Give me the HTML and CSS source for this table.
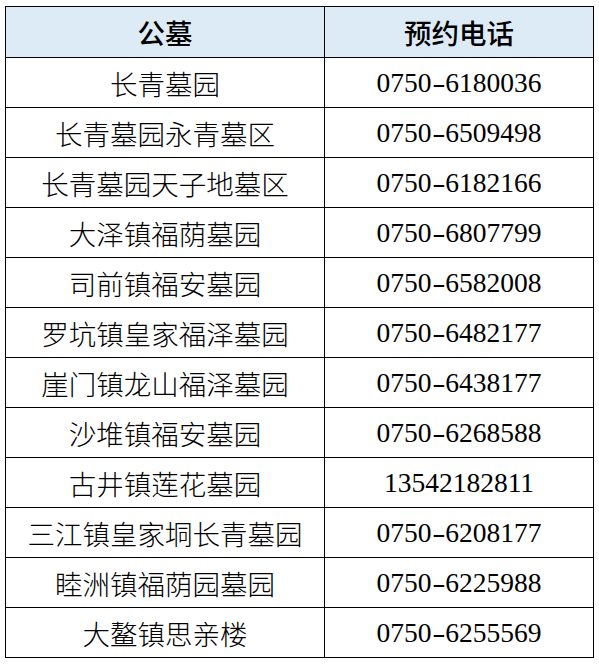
FILE: index.html
```html
<!DOCTYPE html>
<html lang="zh-CN">
<head>
<meta charset="utf-8">
<title>公墓预约电话</title>
<link rel="stylesheet" href="styles.css">
</head>
<body>
<table class="grid">
  <colgroup><col class="c-name"><col class="c-tel"></colgroup>
  <thead>
    <tr class="head"><th>公墓</th><th>预约电话</th></tr>
  </thead>
  <tbody>
    <tr><td>长青墓园</td><td class="tel">0750<span class="dash">-</span>6180036</td></tr>
    <tr><td>长青墓园永青墓区</td><td class="tel">0750<span class="dash">-</span>6509498</td></tr>
    <tr><td>长青墓园天子地墓区</td><td class="tel">0750<span class="dash">-</span>6182166</td></tr>
    <tr><td>大泽镇福荫墓园</td><td class="tel">0750<span class="dash">-</span>6807799</td></tr>
    <tr><td>司前镇福安墓园</td><td class="tel">0750<span class="dash">-</span>6582008</td></tr>
    <tr><td>罗坑镇皇家福泽墓园</td><td class="tel">0750<span class="dash">-</span>6482177</td></tr>
    <tr><td>崖门镇龙山福泽墓园</td><td class="tel">0750<span class="dash">-</span>6438177</td></tr>
    <tr><td>沙堆镇福安墓园</td><td class="tel">0750<span class="dash">-</span>6268588</td></tr>
    <tr><td>古井镇莲花墓园</td><td class="tel">13542182811</td></tr>
    <tr><td>三江镇皇家垌长青墓园</td><td class="tel">0750<span class="dash">-</span>6208177</td></tr>
    <tr><td>睦洲镇福荫园墓园</td><td class="tel">0750<span class="dash">-</span>6225988</td></tr>
    <tr><td>大鳌镇思亲楼</td><td class="tel">0750<span class="dash">-</span>6255569</td></tr>
  </tbody>
</table>
</body>
</html>
```
FILE: styles.css
```css
html, body {
  margin: 0;
  padding: 0;
  background: #ffffff;
}
body {
  padding: 6px 0 0 5px;
  font-family: "Liberation Serif", "Noto Sans CJK SC", serif;
  color: #000;
}
.grid {
  border-collapse: collapse;
  table-layout: fixed;
  width: 588px;
}
.c-name { width: 319px; }
.c-tel { width: 269px; }
.grid th,
.grid td {
  border: 1px solid #000;
  padding: 0;
  text-align: center;
  vertical-align: middle;
  font-size: 27.5px;
  line-height: 30px;
  white-space: nowrap;
  height: 49px;
  font-weight: 300;
  font-family: "Noto Sans CJK SC", sans-serif;
}
.grid .head th {
  background: #ddebf7;
  height: 50px;
  font-weight: 500;
}
.grid td.tel {
  font-family: "Liberation Serif", serif;
  font-size: 27.5px;
  font-weight: 400;
}
.dash {
  display: inline-block;
  width: 13.75px;
  text-align: center;
  transform: scaleX(1.45);
}
```
